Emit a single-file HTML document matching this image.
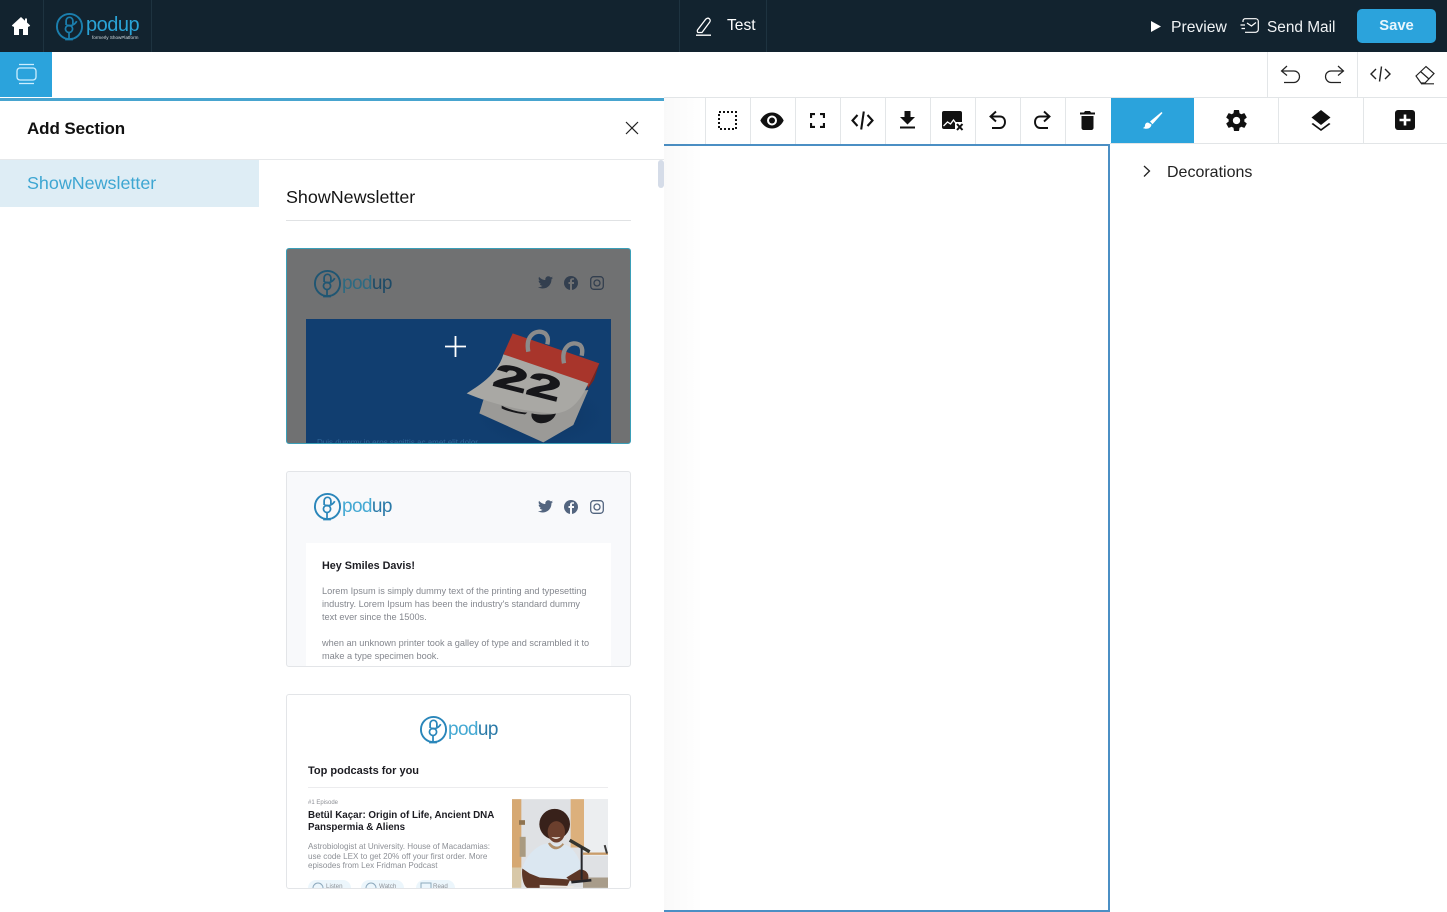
<!DOCTYPE html>
<html><head><meta charset="utf-8"><style>
html,body{margin:0;padding:0;background:#fff}
#r{position:relative;width:1447px;height:912px;overflow:hidden;background:#fff;font-family:"Liberation Sans",sans-serif;color:#111}
#r div,#r svg{position:absolute}
.t{white-space:nowrap}
.sep{width:1px;background:#e3e6e8}
</style></head><body><div id="r">
<svg width="0" height="0"><defs>
<symbol id="mic" viewBox="0 0 30 30"><circle cx="15" cy="15" r="13" fill="none" stroke="currentColor" stroke-width="2"/><path d="M11.500 13.500V9a3.500 3.500 0 0 1 7 0v3.500" fill="none" stroke="currentColor" stroke-width="1.800"/><circle cx="14.500" cy="17.500" r="3.700" fill="none" stroke="currentColor" stroke-width="1.800"/><path d="M12 13.500c3 1.500 8 .5 10.500-4M14.500 21.500V28.500M10.500 28.500h8" fill="none" stroke="currentColor" stroke-width="1.800"/></symbol>
</defs></svg>

<!-- top bar -->
<div style="left:0;top:0;width:1447px;height:52px;background:#12232f"></div>
<div class="sep" style="left:43px;top:0;height:52px;background:#1e3340"></div>
<div class="sep" style="left:151px;top:0;height:52px;background:#1e3340"></div>
<div class="sep" style="left:679px;top:0;height:52px;background:#1e3340"></div>
<div class="sep" style="left:766px;top:0;height:52px;background:#1e3340"></div>
<svg style="left:11px;top:16px" width="20" height="20" viewBox="0 0 20 20"><path d="M10 1 0.800 9.500 2.300 11 3 10.400V19H8V13H12V19H17V10.400L17.700 11 19.200 9.500 16 6.500V2.500H14V4.700Z" fill="#fff"/></svg>
<svg style="left:55px;top:12px;color:#1b7fae" width="29" height="29"><use href="#mic"/></svg>
<div class="t" style="left:86px;top:12px;font-size:20px;line-height:26px;color:#2aa3d6;letter-spacing:-.5px">podup</div>
<div class="t" style="left:92px;top:35px;font-size:4.600px;line-height:6px;color:#d5dde2">formerly ShowPlatform</div>
<svg style="left:695px;top:16px" width="18" height="20" viewBox="0 0 18 20" fill="none" stroke="#fff" stroke-width="1.300"><path d="M2.500 14 10.500 3.500c1-1.300 2.700-1.700 3.800-.8s1.200 2.400.2 3.700L7 16.500H3.200c-.8 0-1.100-1.700-.7-2.500ZM1 19.200h15"/></svg>
<div class="t" style="left:727px;top:15px;font-size:15.600px;line-height:22px;color:#fff">Test</div>
<svg style="left:1151px;top:21px" width="10" height="11"><path d="M0 0 10 5.500 0 11Z" fill="#fff"/></svg>
<div class="t" style="left:1171px;top:17px;font-size:15.700px;line-height:22px;color:#f0f3f5">Preview</div>
<svg style="left:1240px;top:18px" width="19" height="16" viewBox="0 0 19 16" fill="none" stroke="#fff" stroke-width="1.200"><path d="M3 4V3C3 1.500 4 .7 5.500 .7H15.500C17 .7 18.300 1.700 18.300 3.300V11.500C18.300 13 17 14.300 15.500 14.300H5M7 5l4.500 3L16 4.500M.5 7H5M1.500 10.500H5"/></svg>
<div class="t" style="left:1267px;top:17px;font-size:15.400px;line-height:22px;color:#f0f3f5">Send Mail</div>
<div style="left:1357px;top:9px;width:79px;height:34px;background:#2ba3dc;border-radius:5px"></div>
<div class="t" style="left:1357px;top:15px;width:79px;text-align:center;font-size:14.800px;line-height:22px;color:#e8f6fd;font-weight:bold">Save</div>

<!-- second bar -->
<div style="left:0;top:52px;width:52px;height:45px;background:#2ba3dc"></div>
<svg style="left:16px;top:63px" width="21" height="22" viewBox="0 0 21 22" fill="none" stroke="#cdeeff" stroke-width="1.300"><rect x="1" y="5" width="19" height="12" rx="3"/><path d="M3 1.500H18M3 20.500H18"/></svg>
<div class="sep" style="left:1267px;top:52px;height:45px"></div>
<div class="sep" style="left:1357px;top:52px;height:45px"></div>
<svg style="left:1280px;top:65px" width="21" height="19" viewBox="0 0 21 19" fill="none" stroke="#222" stroke-width="1.200"><path d="M7 1 1.500 6 7 10.500M1.500 6H14c3 0 5.500 2.300 5.500 5.500S17 17.500 14 17.500H4"/></svg>
<svg style="left:1324px;top:65px" width="21" height="19" viewBox="0 0 21 19" fill="none" stroke="#222" stroke-width="1.200"><path d="M14 1 19.500 6 14 10.500M19.500 6H7C4 6 1.500 8.300 1.500 11.500S4 17.500 7 17.500H17"/></svg>
<svg style="left:1370px;top:66px" width="21" height="16" viewBox="0 0 21 16" fill="none" stroke="#222" stroke-width="1.400"><path d="M6 3 1 8l5 5M15 3l5 5-5 5M11.500 .5 9.500 15.500"/></svg>
<svg style="left:1415px;top:65px" width="20" height="20" viewBox="0 0 20 20" fill="none" stroke="#222" stroke-width="1.200"><path d="M1 11 11 1.500 19 8.500 10 18H6ZM5.500 6.500 14 14M6 18.800H19"/></svg>

<!-- toolbar -->
<div style="left:664px;top:97px;width:783px;height:1px;background:#e2e5e7"></div>
<div style="left:664px;top:144px;width:446px;height:2px;background:#4b8fc4"></div>
<div style="left:1110px;top:143px;width:337px;height:1px;background:#e2e5e7"></div>
<div class="sep" style="left:705px;top:98px;height:46px"></div>
<div class="sep" style="left:750px;top:98px;height:46px"></div>
<div class="sep" style="left:795px;top:98px;height:46px"></div>
<div class="sep" style="left:840px;top:98px;height:46px"></div>
<div class="sep" style="left:885px;top:98px;height:46px"></div>
<div class="sep" style="left:930px;top:98px;height:46px"></div>
<div class="sep" style="left:975px;top:98px;height:46px"></div>
<div class="sep" style="left:1020px;top:98px;height:46px"></div>
<div class="sep" style="left:1065px;top:98px;height:46px"></div>
<div class="sep" style="left:1278px;top:98px;height:46px"></div>
<div class="sep" style="left:1363px;top:98px;height:46px"></div>
<svg style="left:718px;top:111px" width="19" height="19"><rect x="1" y="1" width="17" height="17" fill="none" stroke="#111" stroke-width="2" stroke-dasharray="2 2"/></svg>
<svg style="left:760px;top:112px" width="24" height="17" viewBox="0 0 24 17"><path d="M12 .500C6.500.500 2.500 4 .300 8.500 2.500 13 6.500 16.500 12 16.500S21.500 13 23.700 8.500C21.500 4 17.500.500 12 .500Z" fill="#111"/><circle cx="12" cy="8.500" r="5" fill="#fff"/><circle cx="12" cy="8.500" r="3" fill="#111"/></svg>
<svg style="left:810px;top:113px" width="15" height="15" fill="none" stroke="#111" stroke-width="2.200"><path d="M1 5V1H5M10 1H14V5M14 10V14H10M5 14H1V10"/></svg>
<svg style="left:851px;top:111px" width="23" height="19" viewBox="0 0 23 19" fill="none" stroke="#111" stroke-width="2.100"><path d="M6.500 4 1.500 9.500l5 5.500M16.500 4l5 5.500-5 5.500M12.800 .5 10.200 18.500"/></svg>
<svg style="left:899px;top:111px" width="17" height="18" viewBox="0 0 17 18" fill="#111"><path d="M5.500 0H11.500V6H16L8.500 13.500 1 6H5.500Z"/><rect x="1" y="15.500" width="15" height="2"/></svg>
<svg style="left:942px;top:110px" width="23" height="22" viewBox="0 0 23 22"><rect x="0" y="1" width="20" height="18" rx="2" fill="#111"/><path d="M1.500 16l4-4 3 2 3-4 3 4" fill="none" stroke="#fff" stroke-width="1.300"/><rect x="13" y="12" width="10" height="10" fill="#fff"/><path d="M15 14l5.500 6M20.500 14 15 20" stroke="#111" stroke-width="2"/></svg>
<svg style="left:988px;top:110px" width="19" height="20" viewBox="0 0 19 20" fill="none" stroke="#111" stroke-width="1.900"><path d="M8 1.500 2.500 6.500 8 11.500M2.500 6.500H12c3 0 5 2.300 5 5.500s-2 6-5 6H4"/></svg>
<svg style="left:1033px;top:110px" width="19" height="20" viewBox="0 0 19 20" fill="none" stroke="#111" stroke-width="1.900"><path d="M11 1.500 16.500 6.500 11 11.500M16.500 6.500H7c-3 0-5 2.300-5 5.500s2 6 5 6H15"/></svg>
<svg style="left:1080px;top:111px" width="15" height="19" viewBox="0 0 15 19" fill="#111"><path d="M5 0H10L11 1.500H15V3.500H0V1.500H4ZM1.500 5H13.500V17c0 1-1 2-2 2H3.500c-1 0-2-1-2-2Z"/></svg>

<div style="left:1111px;top:98px;width:83px;height:45px;background:#2ba3dc"></div>
<svg style="left:1142px;top:111px" width="21" height="20" viewBox="0 0 21 20" fill="#fff"><path d="M19.500 1 8 10.500l2.500 2.700L20.500 2Z"/><path d="M6 11.500c-2 0-3 1.500-3 3 0 1.200-.800 2-2 2.500 3 1.500 8 1 8.500-3.500Z"/></svg>
<svg style="left:1226px;top:110px" width="21" height="21" viewBox="2 2 20 20"><path fill="#111" d="M19.430 12.980c.04-.32.07-.64.07-.98s-.03-.66-.07-.98l2.110-1.650c.19-.15.24-.42.12-.64l-2-3.460c-.12-.22-.39-.3-.61-.22l-2.490 1c-.52-.4-1.080-.73-1.690-.98l-.38-2.650A.49.49 0 0 0 14 2h-4c-.25 0-.46.18-.49.420l-.38 2.650c-.61.250-1.170.590-1.690.980l-2.490-1c-.23-.090-.490 0-.61.220l-2 3.460c-.13.220-.070.490.12.640l2.110 1.650c-.040.320-.070.650-.070.980s.030.660.070.980l-2.110 1.650c-.19.150-.24.420-.12.640l2 3.460c.12.220.39.300.61.220l2.490-1c.52.400 1.080.730 1.690.980l.38 2.650c.030.240.240.420.49.420h4c.25 0 .46-.18.49-.42l.38-2.650c.61-.25 1.170-.59 1.690-.98l2.490 1c.23.090.49 0 .61-.22l2-3.460c.12-.22.070-.49-.12-.64zM12 15.500A3.500 3.500 0 1 1 12 8.500a3.500 3.500 0 0 1 0 7z"/></svg>
<svg style="left:1311px;top:110px" width="20" height="21" viewBox="0 0 20 21" fill="#111"><path d="M10 0 19.500 7.500 10 15 .5 7.500Z"/><path d="M2 13 .5 14 10 21 19.500 14 18 13 10 19Z"/></svg>
<svg style="left:1395px;top:110px" width="20" height="20"><rect width="20" height="20" rx="3" fill="#111"/><path d="M10 4.500V15.500M4.500 10H15.500" stroke="#fff" stroke-width="2.600"/></svg>

<svg style="left:1143px;top:165px" width="8" height="13" fill="none" stroke="#222" stroke-width="1.300"><path d="M1 1 6.500 6 1 11.500"/></svg>
<div class="t" style="left:1167px;top:162px;font-size:16px;line-height:22px;color:#222">Decorations</div>

<!-- canvas edge -->
<div style="left:1108px;top:144px;width:2px;height:768px;background:#4b8fc4"></div>
<div style="left:664px;top:910px;width:446px;height:2px;background:#4b8fc4"></div>

<!-- panel -->
<div style="left:664px;top:98px;width:40px;height:812px;background:linear-gradient(90deg,rgba(0,0,0,.025),rgba(0,0,0,0))"></div>
<div style="left:0;top:98px;width:664px;height:814px;background:#fff"></div>
<div style="left:0;top:98px;width:664px;height:3px;background:#47a4cf"></div>
<div class="t" style="left:27px;top:117px;font-size:17px;line-height:24px;font-weight:bold;color:#111;letter-spacing:-.1px">Add Section</div>
<svg style="left:625px;top:121px" width="14" height="14" stroke="#222" stroke-width="1.200"><path d="M1 1 13 13M13 1 1 13"/></svg>
<div style="left:0;top:159px;width:664px;height:1px;background:#e6e8ea"></div>
<div style="left:0;top:160px;width:259px;height:47px;background:#deedf5"></div>
<div class="t" style="left:27px;top:171px;font-size:17.900px;line-height:24px;color:#3ea6d2">ShowNewsletter</div>
<div class="t" style="left:286px;top:185px;font-size:17.900px;line-height:24px;color:#151515">ShowNewsletter</div>
<div style="left:286px;top:220px;width:345px;height:1px;background:#e0e2e4"></div>
<div style="left:658px;top:160px;width:6px;height:28px;background:#d5dce8;border-radius:3px"></div>

<!-- card 1 -->
<div style="left:286px;top:248px;width:345px;height:196px;box-sizing:border-box;border:1px solid #3a9fb8;border-radius:3px;background:#707172;overflow:hidden">
  <svg style="left:26px;top:20px;color:#1f5673" width="29" height="29"><use href="#mic"/></svg>
  <div class="t" style="left:55px;top:22px;font-size:19px;line-height:25px;letter-spacing:-.6px;color:#2d6a82">pod<span style="color:#1d4a66">up</span></div>
  <svg style="left:251px;top:27px" width="15" height="13" viewBox="0 0 24 20"><path fill="#333f4f" d="M24 2.400c-.9.400-1.800.7-2.800.8 1-.6 1.800-1.600 2.200-2.700-1 .6-2 1-3.100 1.200C19.300.7 18 0 16.600 0c-2.700 0-4.900 2.200-4.900 4.900 0 .4 0 .8.100 1.100C7.700 5.800 4.100 3.800 1.700.9c-.4.700-.7 1.600-.7 2.500 0 1.700.9 3.200 2.200 4.100-.8 0-1.600-.2-2.200-.6v.1c0 2.400 1.700 4.400 3.900 4.800-.4.100-.8.200-1.300.2-.3 0-.6 0-.9-.1.600 2 2.400 3.400 4.600 3.400-1.700 1.300-3.800 2.100-6.100 2.100-.4 0-.8 0-1.200-.1 2.200 1.400 4.800 2.200 7.500 2.200 9.100 0 14-7.500 14-14v-.6c1-.7 1.800-1.600 2.500-2.500z"/></svg>
  <svg style="left:277px;top:27px" width="14" height="14"><circle cx="7" cy="7" r="7" fill="#333f4f"/><path d="M8 14V8h2V6H8V4.500C8 4 8.300 3.800 9 3.800h1V2.200H8.500C7 2.200 6 3 6 4.500V6H4.500v2H6v6Z" fill="#707172"/></svg>
  <svg style="left:303px;top:27px" width="14" height="14" fill="none" stroke="#333f4f" stroke-width="1.300"><rect x=".7" y=".7" width="12.600" height="12.600" rx="3"/><circle cx="7" cy="7" r="3"/></svg>
  <div style="left:19px;top:70px;width:305px;height:125px;background:#113e70;overflow:hidden">
    <svg style="left:134px;top:-4px" width="180" height="130" viewBox="0 0 540 390">
      <defs><radialGradient id="sh" cx=".5" cy=".5" r=".5"><stop offset="0" stop-color="#082a52" stop-opacity=".8"/><stop offset="1" stop-color="#113e70" stop-opacity="0"/></radialGradient></defs>
      <ellipse cx="300" cy="300" rx="220" ry="110" fill="url(#sh)"/>
      <path d="M130 255 118 295 310 382 400 330 445 225Z" fill="#9b9a97"/>
      <path d="M185 272C210 285 240 292 262 293L255 298C230 295 205 290 185 280Z" fill="#17171a"/>
      <path d="M275 295C295 300 330 300 348 296 340 320 310 330 290 322 278 316 272 305 275 295Z" fill="#17171a"/>
      <path d="M218 55 478 145 445 215 190 118Z" fill="#a8352b"/>
      <path d="M478 145 445 215 440 226 462 195Z" fill="#7a241d"/>
      <path d="M190 118 445 205C420 260 390 295 340 295 250 290 150 265 80 235 130 205 175 170 190 118Z" fill="#a9a8a4"/>
      <text x="158" y="236" font-size="100" font-weight="bold" font-family="Liberation Sans,sans-serif" fill="#17171a" stroke="#17171a" stroke-width="3" transform="rotate(14 260 210)" textLength="205" lengthAdjust="spacingAndGlyphs">22</text>
      <path d="M265 110C255 60 290 40 315 55 325 65 325 75 322 88" fill="none" stroke="#8b8b8b" stroke-width="13"/>
      <path d="M372 145C362 95 395 75 420 90 428 98 428 108 425 122" fill="none" stroke="#8b8b8b" stroke-width="13"/>
    </svg>
    <svg style="left:139px;top:17px" width="21" height="21" stroke="#fff" stroke-width="1.800"><path d="M10.500 0V21M0 10.500H21"/></svg>
    <div class="t" style="left:11px;top:119px;font-size:8px;line-height:9px;color:#2f6699">Duis dummy in eros sagittis ac amet elit dolor</div>
  </div>
</div>

<!-- card 2 -->
<div style="left:286px;top:471px;width:345px;height:196px;box-sizing:border-box;border:1px solid #e3e5e8;border-radius:3px;background:#f8f9fb;overflow:hidden">
  <svg style="left:26px;top:20px;color:#2a86ba" width="29" height="29"><use href="#mic"/></svg>
  <div class="t" style="left:55px;top:22px;font-size:19px;line-height:25px;letter-spacing:-.6px;color:#45a9d3">pod<span style="color:#2a7aa8">up</span></div>
  <svg style="left:251px;top:28px" width="15" height="13" viewBox="0 0 24 20"><path fill="#53657f" d="M24 2.400c-.9.400-1.800.7-2.800.8 1-.6 1.800-1.600 2.200-2.700-1 .6-2 1-3.100 1.200C19.300.7 18 0 16.600 0c-2.700 0-4.900 2.200-4.900 4.900 0 .4 0 .8.100 1.100C7.700 5.800 4.100 3.800 1.700.9c-.4.700-.7 1.600-.7 2.500 0 1.700.9 3.200 2.200 4.100-.8 0-1.600-.2-2.200-.6v.1c0 2.400 1.700 4.400 3.900 4.800-.4.100-.8.200-1.300.2-.3 0-.6 0-.9-.1.600 2 2.400 3.400 4.600 3.400-1.700 1.300-3.800 2.100-6.100 2.100-.4 0-.8 0-1.200-.1 2.200 1.400 4.800 2.200 7.500 2.200 9.100 0 14-7.500 14-14v-.6c1-.7 1.800-1.600 2.500-2.500z"/></svg>
  <svg style="left:277px;top:28px" width="14" height="14"><circle cx="7" cy="7" r="7" fill="#53657f"/><path d="M8 14V8h2V6H8V4.500C8 4 8.300 3.800 9 3.800h1V2.200H8.500C7 2.200 6 3 6 4.500V6H4.500v2H6v6Z" fill="#f8f9fb"/></svg>
  <svg style="left:303px;top:28px" width="14" height="14" fill="none" stroke="#53657f" stroke-width="1.300"><rect x=".7" y=".7" width="12.600" height="12.600" rx="3"/><circle cx="7" cy="7" r="3"/></svg>
  <div style="left:19px;top:71px;width:305px;height:125px;background:#fff"></div>
  <div class="t" style="left:35px;top:87px;font-size:10.800px;line-height:14px;font-weight:bold;color:#1c1c22">Hey Smiles Davis!</div>
  <div class="t" style="left:35px;top:113px;font-size:9.200px;line-height:13px;color:#84878e">Lorem Ipsum is simply dummy text of the printing and typesetting<br>industry. Lorem Ipsum has been the industry's standard dummy<br>text ever since the 1500s.<br><br>when an unknown printer took a galley of type and scrambled it to<br>make a type specimen book.</div>
</div>

<!-- card 3 -->
<div style="left:286px;top:694px;width:345px;height:195px;box-sizing:border-box;border:1px solid #e3e5e8;border-radius:3px;background:#fff;overflow:hidden">
  <svg style="left:132px;top:20px;color:#2a86ba" width="29" height="29"><use href="#mic"/></svg>
  <div class="t" style="left:161px;top:22px;font-size:19px;line-height:25px;letter-spacing:-.6px;color:#45a9d3">pod<span style="color:#2a7aa8">up</span></div>
  <div class="t" style="left:21px;top:69px;font-size:11px;line-height:14px;font-weight:bold;color:#1c1c22">Top podcasts for you</div>
  <div style="left:21px;top:92px;width:300px;height:1px;background:#ececee"></div>
  <div class="t" style="left:21px;top:104px;font-size:6px;line-height:8px;color:#8c8e94">#1 Episode</div>
  <div class="t" style="left:21px;top:115px;font-size:9.800px;line-height:12px;font-weight:bold;color:#1c1c22">Betül Kaçar: Origin of Life, Ancient DNA<br>Panspermia &amp; Aliens</div>
  <div class="t" style="left:21px;top:147px;font-size:8.100px;line-height:9.500px;color:#8d9096">Astrobiologist at University. House of Macadamias:<br>use code LEX to get 20% off your first order. More<br>episodes from Lex Fridman Podcast</div>
  <div style="left:21px;top:185px;width:43px;height:16px;background:#ecf6fc;border-radius:8px"></div>
  <div style="left:74px;top:185px;width:43px;height:16px;background:#ecf6fc;border-radius:8px"></div>
  <div style="left:129px;top:185px;width:39px;height:16px;background:#ecf6fc;border-radius:8px"></div>
  <svg style="left:25px;top:187px" width="12" height="12" fill="none" stroke="#8da9bd"><circle cx="6" cy="6" r="5"/></svg>
  <svg style="left:78px;top:187px" width="12" height="12" fill="none" stroke="#8da9bd"><circle cx="6" cy="6" r="5"/></svg>
  <svg style="left:133px;top:187px" width="12" height="12" fill="none" stroke="#8da9bd"><rect x="1" y="1" width="10" height="10"/></svg>
  <div class="t" style="left:39px;top:188px;font-size:6.200px;line-height:8px;color:#8d9096">Listen</div>
  <div class="t" style="left:92px;top:188px;font-size:6.200px;line-height:8px;color:#8d9096">Watch</div>
  <div class="t" style="left:146px;top:188px;font-size:6.200px;line-height:8px;color:#8d9096">Read</div>
  <svg style="left:225px;top:104px" width="96" height="89" viewBox="37 27 288 266">
    <rect x="37" y="27" width="288" height="266" fill="#dfe1e4"/>
    <rect x="253" y="27" width="72" height="170" fill="#eceef0"/>
    <rect x="37" y="27" width="28" height="205" fill="#d6a872"/>
    <rect x="58" y="90" width="18" height="14" fill="#8f7350"/>
    <rect x="60" y="140" width="18" height="60" fill="#a99a80"/>
    <rect x="213" y="27" width="40" height="145" fill="#dcb07c"/>
    <rect x="250" y="187" width="75" height="7" fill="#c99c6a"/>
    <rect x="37" y="232" width="28" height="61" fill="#d8c8a8"/>
    <rect x="250" y="262" width="75" height="31" fill="#a89c8a"/>
    <path d="M68 235C80 190 120 160 145 160L200 165C225 175 245 215 250 245L200 265H120L75 250Z" fill="#dbe7f1"/>
    <path d="M68 235C65 255 70 285 82 293H200L212 268 120 262 90 250Z" fill="#5c3626"/>
    <path d="M120 284 225 288 215 293H120Z" fill="#ece8e2"/>
    <path d="M240 238C265 238 270 258 264 270L215 274 200 262Z" fill="#5c3626"/>
    <ellipse cx="165" cy="102" rx="46" ry="46" fill="#38211a"/>
    <ellipse cx="170" cy="125" rx="26" ry="32" fill="#6b3f2d"/>
    <path d="M155 140q14 12 28 0-14 3-28 0Z" fill="#f4efe8"/>
    <path d="M145 160c10 20 30 25 48 3l-4-4c-10 14-25 14-38-2Z" fill="#b08f6a"/>
    <path d="M210 150 270 185" stroke="#35352f" stroke-width="10"/>
    <path d="M246 172V268" stroke="#26262a" stroke-width="6"/>
    <path d="M215 276 275 270" stroke="#26262a" stroke-width="8"/>
    <path d="M315 165 322 190" stroke="#3a3a3a" stroke-width="6"/>
  </svg>
</div>
<div style="left:286px;top:889px;width:345px;height:23px;background:#fff"></div>
</div></body></html>
